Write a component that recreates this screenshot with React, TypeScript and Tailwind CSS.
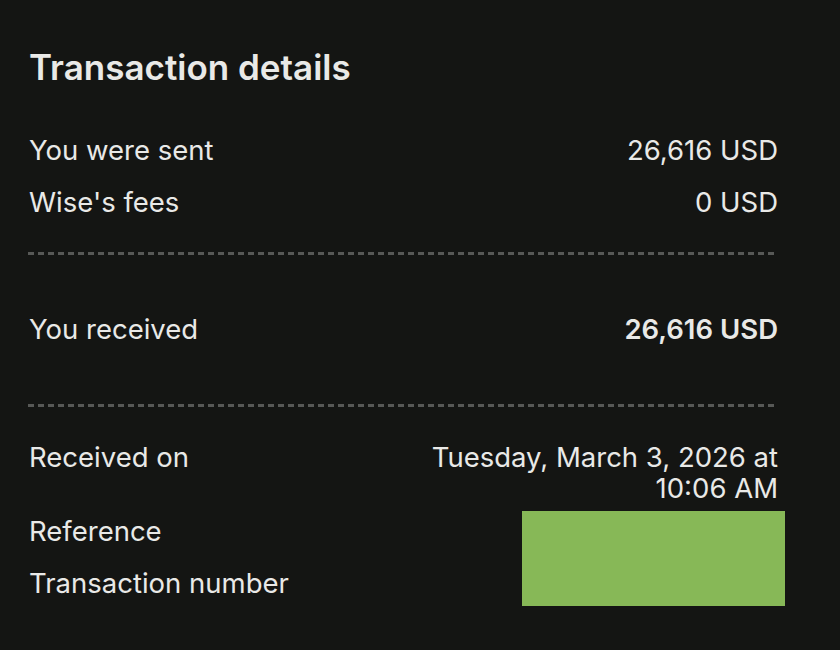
import React from "react";

const Row: React.FC<{ label: string; value?: React.ReactNode; bold?: boolean; className?: string }> = ({
    label,
    value,
    bold,
    className = "",
}) => (
    <div className={`flex justify-between items-start leading-[31px] ${className}`}>
        <span>{label}</span>
        {value && <span className={`text-right ${bold ? "font-semibold" : ""}`}>{value}</span>}
    </div>
);

const Divider: React.FC = () => (
    <div className="h-[3px] w-full bg-[repeating-linear-gradient(90deg,#575856_0_6px,transparent_6px_10px)]" />
);

const App: React.FC = () => {
    return (
        <div className="w-[840px] h-[650px] overflow-hidden bg-[#141513] text-[#e9e9e7] font-['Inter',sans-serif] text-[27.5px] pl-[28px] pt-[47px]">
            <div className="w-[750px]">
                <h2 className="pl-px text-[35px] font-semibold leading-[40px]">Transaction details</h2>

                <div className="mt-[48px] pl-px flex flex-col gap-[21px]">
                    <Row label="You were sent" value="26,616 USD" />
                    <Row label="Wise's fees" value="0 USD" />
                </div>

                <div className="mt-[34px]">
                    <Divider />
                </div>

                <Row className="mt-[59px] pl-px" label="You received" value="26,616 USD" bold />

                <div className="mt-[59px]">
                    <Divider />
                </div>

                <div className="relative mt-[35px] pl-px flex flex-col">
                    <Row label="Received on" value={<>Tuesday, March 3, 2026 at<br />10:06 AM</>} />
                    <Row className="mt-[12px]" label="Reference" />
                    <Row className="mt-[21px]" label="Transaction number" />
                    {/* redacted values */}
                    <div className="absolute left-[494px] top-[69px] w-[263px] h-[95px] bg-[#87b857]" />
                </div>
            </div>
        </div>
    );
};

export default App;
